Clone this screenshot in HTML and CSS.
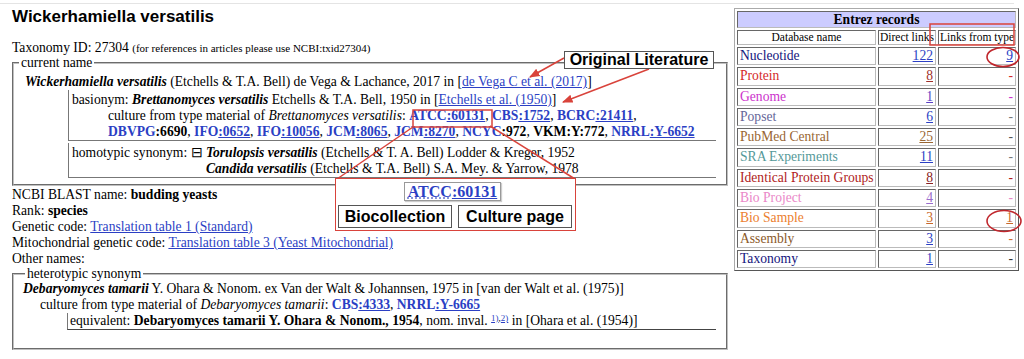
FILE: index.html
```html
<!DOCTYPE html>
<html>
<head>
<title>Wickerhamiella versatilis - Taxonomy Browser</title>
<link rel="stylesheet" href="styles.css">
</head>
<body>
<div class="rule"></div>
<div class="page">
  <div class="main">
    <h1 class="title">Wickerhamiella versatilis</h1>
    <div class="taxid">Taxonomy ID: 27304 <span class="note">(for references in articles please use NCBI:txid27304)</span></div>

    <fieldset class="names current">
      <legend>current name</legend>
      <div class="nameline"><b><i>Wickerhamiella versatilis</i></b> (Etchells &amp; T.A. Bell) de Vega &amp; Lachance, 2017 in [<a href="#">de Vega C et al. (2017)</a>]</div>
      <div class="syn">
        basionym: <b><i>Brettanomyces versatilis</i></b> Etchells &amp; T.A. Bell, 1950 in [<a href="#">Etchells et al. (1950)</a>]
        <div class="culture">culture from type material of <i>Brettanomyces versatilis</i>:
          <b><a class="coll">ATCC</a><a href="#">:60131</a></b>,
          <b><a class="coll">CBS</a><a href="#">:1752</a></b>,
          <b><a class="coll">BCRC</a><a href="#">:21411</a></b>,
          <b><a class="coll">DBVPG</a>:6690</b>,
          <b><a class="coll">IFO</a><a href="#">:0652</a></b>,
          <b><a class="coll">IFO</a><a href="#">:10056</a></b>,
          <b><a class="coll">JCM</a><a href="#">:8065</a></b>,
          <b><a class="coll">JCM</a><a href="#">:8270</a></b>,
          <b><a class="coll">NCYC</a>:972</b>,
          <b>VKM:Y:772</b>,
          <b><a class="coll">NRRL</a><a href="#">:Y-6652</a></b>
        </div>
      </div>
      <div class="syn split">
        <span>homotypic synonym: &#8863;&nbsp;</span>
        <div>
          <b><i>Torulopsis versatilis</i></b> (Etchells &amp; T. A. Bell) Lodder &amp; Kreger, 1952<br>
          <b><i>Candida versatilis</i></b> (Etchells &amp; T.A. Bell) S.A. Mey. &amp; Yarrow, 1978
        </div>
      </div>
    </fieldset>

    <div class="facts">
      <div>NCBI BLAST name: <b>budding yeasts</b></div>
      <div>Rank: <b>species</b></div>
      <div>Genetic code: <a href="#">Translation table 1 (Standard)</a></div>
      <div>Mitochondrial genetic code: <a href="#">Translation table 3 (Yeast Mitochondrial)</a></div>
      <div>Other names:</div>
    </div>

    <fieldset class="names other">
      <legend>heterotypic synonym</legend>
      <div><b><i>Debaryomyces tamarii</i></b> Y. Ohara &amp; Nonom. ex Van der Walt &amp; Johannsen, 1975 in [van der Walt et al. (1975)]</div>
      <div class="culture-short">culture from type material of <i>Debaryomyces tamarii</i>:
        <b><a class="coll">CBS</a><a href="#">:4333</a></b>,
        <b><a class="coll">NRRL</a><a href="#">:Y-6665</a></b>
      </div>
      <div class="equiv">equivalent: <b>Debaryomyces tamarii Y. Ohara &amp; Nonom., 1954</b>, nom. inval. <sup><a href="#">1)</a>,<a href="#">2)</a></sup> in [Ohara et al. (1954)]</div>
    </fieldset>
  </div>

  <table class="entrez">
    <colgroup><col class="c1"><col class="c2"><col class="c3"></colgroup>
    <tr><th colspan="3" class="cap">Entrez records</th></tr>
    <tr class="heads"><td>Database name</td><td>Direct links</td><td>Links from type</td></tr>
    <tr class="r-nuc"><td class="db">Nucleotide</td><td class="n"><a href="#">122</a></td><td class="n"><a href="#">9</a></td></tr>
    <tr class="r-prot"><td class="db">Protein</td><td class="n"><a href="#">8</a></td><td class="n">-</td></tr>
    <tr class="r-gen"><td class="db">Genome</td><td class="n"><a href="#">1</a></td><td class="n">-</td></tr>
    <tr class="r-pop"><td class="db">Popset</td><td class="n"><a href="#">6</a></td><td class="n">-</td></tr>
    <tr class="r-pmc"><td class="db">PubMed Central</td><td class="n"><a href="#">25</a></td><td class="n">-</td></tr>
    <tr class="r-sra"><td class="db">SRA Experiments</td><td class="n"><a href="#">11</a></td><td class="n">-</td></tr>
    <tr class="r-ipg"><td class="db">Identical Protein Groups</td><td class="n"><a href="#">8</a></td><td class="n">-</td></tr>
    <tr class="r-bp"><td class="db">Bio Project</td><td class="n"><a href="#">4</a></td><td class="n">-</td></tr>
    <tr class="r-bs"><td class="db">Bio Sample</td><td class="n"><a href="#">3</a></td><td class="n"><a href="#">1</a></td></tr>
    <tr class="r-asm"><td class="db">Assembly</td><td class="n"><a href="#">3</a></td><td class="n">-</td></tr>
    <tr class="r-tax"><td class="db">Taxonomy</td><td class="n"><a href="#">1</a></td><td class="n">-</td></tr>
  </table>
</div>

<!-- annotation layer -->
<svg class="marks" width="1024" height="359" viewBox="0 0 1024 359">
  <defs>
    <marker id="head" viewBox="0 0 10 10" refX="9" refY="5" markerWidth="7" markerHeight="7" orient="auto">
      <path d="M0 1 L10 5 L0 9 z" fill="#d9433b"/>
    </marker>
  </defs>
  <g stroke="#d9433b" stroke-width="1.5" fill="none">
    <line x1="564" y1="58" x2="530" y2="77" marker-end="url(#head)"/>
    <line x1="649" y1="69" x2="563" y2="102" marker-end="url(#head)"/>
    <rect x="413" y="110" width="79" height="17"/>
    <line x1="413" y1="127" x2="337" y2="179"/>
    <line x1="490" y1="126" x2="575" y2="179"/>
    <rect x="930" y="24" width="84" height="21"/>
  </g>
  <g stroke="#c0272d" stroke-width="1.6" fill="none">
    <ellipse cx="1003" cy="57" rx="16" ry="9.5"/>
    <ellipse cx="1004" cy="221" rx="17" ry="10.5"/>
  </g>
</svg>

<div class="tag lit">Original Literature</div>

<div class="popup">
  <div class="pop-link"><a class="coll">ATCC</a><a href="#">:60131</a></div>
  <div class="pop-btns">
    <span class="tag">Biocollection</span>
    <span class="tag">Culture page</span>
  </div>
</div>
</body>
</html>
```

FILE: styles.css
```css
body
{
    margin: 0;
    font-family: "Liberation Serif", "Times New Roman", serif;
    font-size: 13.6px;
    line-height: 16px;
    color: #000;
}

a
{
    color: #2b3fc4;
    text-decoration: underline;
}

.rule
{
    width: 1014px;
    margin-top: 3px;
    border-top: 1px solid #e4e4e4;
}

.page
{
    display: flex;
    align-items: flex-start;
    gap: 6px;
    padding-left: 12px;
}

.main
{
    width: 716px;
}

.title
{
    font-family: "Liberation Sans", Arial, sans-serif;
    font-size: 17px;
    line-height: 20px;
    margin: 3px 0 0;
}

.taxid
{
    margin-top: 13px;
}

.note
{
    font-size: 11px;
}

/* name boxes */
fieldset.names
{
    margin: 0;
    border: 2px groove #c0c0c0;
    min-width: 0;
}

fieldset.names legend
{
    line-height: 14px;
    padding: 0 2px;
}

.current
{
    padding: 4px 10px 6px 11px;
}

.current legend
{
    margin-left: -6px;
}

.syn
{
    margin-left: 43px;
    padding: 2px 0 0 3px;
    border-left: 1px solid #777;
    border-bottom: 1px solid #777;
}

.syn + .syn
{
    margin-top: 2px;
}

.split
{
    display: flex;
}

.culture
{
    margin-left: 36px;
}

a.coll
{
    text-decoration: none;
}

.facts
{
    margin-top: 1px;
}

.other
{
    margin: 0 3px;
    padding: 0 10px 18px 9px;
}

.other legend
{
    margin-left: 2px;
}

.culture-short
{
    margin-left: 17px;
}

.equiv
{
    margin-left: 44px;
    padding-left: 2px;
    border-left: 1px solid #777;
    border-bottom: 1px solid #444;
}

sup
{
    font-size: 9px;
    line-height: 0;
    vertical-align: 4px;
}

/* entrez table */
.entrez
{
    margin-top: 4px;
    width: 279px;
    table-layout: fixed;
    border: 1px outset #aaa;
    border-spacing: 2px;
}

.c1 { width: 139px; }
.c2 { width: 58px; }
.c3 { width: 78px; }

.entrez td,
.entrez th
{
    border: 1px inset #bbb;
    padding: 0 2px;
    line-height: 16.3px;
    white-space: nowrap;
    overflow: hidden;
}

.entrez .cap
{
    background: #ccccff;
    line-height: 15px;
}

.heads td
{
    font-size: 11.5px;
    line-height: 13px;
    text-align: center;
    padding: 0;
}

.n
{
    text-align: right;
}

.r-nuc .db { color: #15157d; }
.r-prot .db, .r-prot .n { color: #d42a2a; }
.r-prot a { color: #a0302a; }
.r-gen .db, .r-gen .n { color: #cc33cc; }
.r-gen a { color: #5a3fc4; }
.r-pop .db { color: #666699; }
.r-pop .n { color: #777; }
.r-pmc .db { color: #996633; }
.r-pmc a { color: #996633; }
.r-pmc .n { color: #555; }
.r-sra .db { color: #559999; }
.r-sra .n { color: #777; }
.r-ipg .db, .r-ipg .n { color: #b01c1c; }
.r-ipg a { color: #8a2222; }
.r-bp .db, .r-bp .n { color: #ea88c8; }
.r-bp a { color: #9a6ccc; }
.r-bs .db { color: #ec8030; }
.r-bs a { color: #c8682a; }
.r-asm .db { color: #8b5a2b; }
.r-asm .n { color: #d07030; }
.r-asm a { color: #2b3fc4; }
.r-tax .db { color: #15157d; }
.r-tax .n { color: #333; }

/* annotation layer */
.marks
{
    position: absolute;
    left: 0;
    top: 0;
    pointer-events: none;
}

.tag
{
    font-family: "Liberation Sans", Arial, sans-serif;
    font-weight: bold;
    font-size: 16px;
    line-height: 19px;
    background: #fff;
    border: 1px solid #555;
    text-align: center;
    box-sizing: border-box;
}

.lit
{
    position: absolute;
    left: 564px;
    top: 51px;
    width: 150px;
    height: 18px;
    line-height: 16px;
}

.popup
{
    position: absolute;
    left: 335px;
    top: 178px;
    width: 241px;
    height: 53px;
    box-sizing: border-box;
    border: 1.5px solid #d9433b;
    background: #fff;
    padding: 3px 2px 0;
}

.pop-link
{
    margin-left: 66px;
    width: 97px;
    box-sizing: border-box;
    border: 1px solid #999;
    box-shadow: 1px 1px 1px #ccc;
    font-weight: bold;
    font-size: 16px;
    line-height: 17px;
    text-align: center;
}

.pop-link a.coll
{
    text-decoration: underline dotted #6070d0;
}

.pop-btns
{
    display: flex;
    gap: 6px;
    margin-top: 4px;
}

.pop-btns .tag
{
    width: 114px;
    height: 23px;
    line-height: 21px;
}
```
